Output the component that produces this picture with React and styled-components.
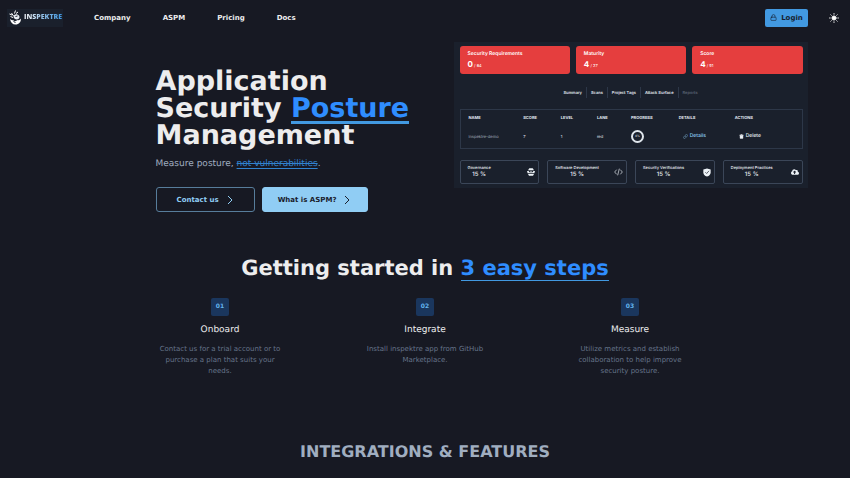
import React from "react";
import styled, { createGlobalStyle } from "styled-components";
import { Lock, Link, Trash } from "lucide-react";
import { FaCloudUploadAlt } from "react-icons/fa";

const GlobalStyle = createGlobalStyle`
  * { box-sizing: border-box; }
  body {
    margin: 0;
    background: #171923;
    color: #ededee;
    font-family: "DejaVu Sans", sans-serif;
    font-size: 7px;
    text-rendering: geometricPrecision;
    overflow-x: hidden;
  }
  h1, h2, h3, p { margin: 0; }
  a { color: inherit; text-decoration: none; }
  button { font-family: inherit; text-rendering: inherit; cursor: pointer; }
`;

const Header = styled.header`
  display: flex;
  align-items: center;
  height: 35px;
  padding: 0 11px 0 7px;
`;

const Brand = styled.a`
  display: flex;
  align-items: center;
  gap: 3px;
  height: 18px;
  padding: 0 1px 0 2px;
  background: #1a202c;
`;

const BrandName = styled.span`
  font: 800 7px "Open Sans", sans-serif;
  background: linear-gradient(90deg, #e8eef5 10%, #90bfe8 50%, #3f97e0 100%);
  background-clip: text;
  color: transparent;
`;

const Nav = styled.nav`
  display: flex;
  flex: 1;
  gap: 32px;
  margin-left: 31px;
  font-weight: 700;
`;

const LoginButton = styled.button`
  display: flex;
  align-items: center;
  justify-content: center;
  gap: 4px;
  width: 43px;
  height: 18px;
  margin-right: 21px;
  padding: 0;
  border: 0;
  border-radius: 2px;
  background: #4299e1;
  color: #171f30;
  font-size: 7px;
  font-weight: 700;
`;

const ThemeButton = styled.button`
  display: flex;
  padding: 0;
  border: 0;
  background: none;
  color: #ffffff;
`;

const Hero = styled.section`
  display: grid;
  grid-template-columns: 298fr 354fr;
  padding: 7px 5% 0 18.3%;
`;

const HeroCopy = styled.div`
  padding-top: 26px;
`;

const Title = styled.h1`
  font-size: 27px;
  line-height: 27px;
  white-space: nowrap;
`;

const Accent = styled.span`
  color: #2f8dff;
  border-bottom: ${(p) => p.$line}px solid #4299e1;
`;

const HeroTitleAccent = styled(Accent)`
  display: inline-block;
  height: 29px;
  margin-bottom: -2px;
`;

const Lead = styled.p`
  margin-top: 9px;
  color: #a0aec0;
  font-size: 9px;
  line-height: 13px;
`;

const Struck = styled.span`
  color: #3182ce;
  text-decoration: line-through underline #3182ce;
  text-underline-offset: 2px;
`;

const Actions = styled.div`
  display: flex;
  gap: 7px;
  margin-top: 16px;
`;

const ActionButton = styled.button`
  display: flex;
  align-items: center;
  justify-content: center;
  gap: 8px;
  width: ${(p) => (p.$solid ? 106 : 99)}px;
  height: 25px;
  padding: 0;
  border: 1px solid ${(p) => (p.$solid ? "#90cdf4" : "#577d9b")};
  border-radius: 3px;
  background: ${(p) => (p.$solid ? "#90cdf4" : "transparent")};
  color: ${(p) => (p.$solid ? "#1a202c" : "#90cdf4")};
  font-size: 7px;
  font-weight: 700;
`;

const Preview = styled.div`
  padding: 4px 5px 4px 6px;
  height: 146px;
  background: #1a202c;
  font-family: Inter, sans-serif;
  font-size: 4px;
  line-height: 5px;
`;

const ScoreCards = styled.div`
  display: grid;
  grid-template-columns: repeat(3, 1fr);
  gap: 6px;
`;

const ScoreCard = styled.div`
  height: 28px;
  padding: 5px 8px;
  border-radius: 3px;
  background: #e53e3e;
  color: #ffffff;
`;

const ScoreLabel = styled.div`
  font-size: 5px;
  font-weight: 600;
  line-height: 7px;
`;

const ScoreValue = styled.div`
  font-size: 4px;
  line-height: 12px;
  strong { font-size: 8px; }
`;

const Tabs = styled.div`
  display: flex;
  width: max-content;
  height: 11px;
  margin: 13px auto 0;
`;

const Tab = styled.button`
  padding: 0 4px;
  border: 0;
  border-right: 1px solid ${(p) => (p.disabled ? "transparent" : "#2d3748")};
  background: none;
  color: ${(p) => (p.disabled ? "#596272" : "#e2e8f0")};
  font-size: 4px;
  font-weight: 600;
`;

const TableFrame = styled.div`
  height: 40px;
  margin-top: 11px;
  border: 1px solid #2d3748;
`;

const ProjectTable = styled.table`
  width: 100%;
  border-collapse: collapse;
  table-layout: fixed;
  color: #e2e8f0;
  th, td { padding: 0; text-align: left; }
  th:first-child, td:first-child { padding-left: 8px; }
  th { height: 14px; font-size: 4px; font-weight: 700; }
  td { height: 24px; }
`;

const NameCell = styled.td`
  color: #a8b1bf;
`;

const Ring = styled.div`
  display: flex;
  align-items: center;
  justify-content: center;
  width: 13px;
  height: 13px;
  border: 2px solid #dfe5ec;
  border-radius: 50%;
  font-size: 3px;
`;

const RowButton = styled.button`
  display: flex;
  align-items: center;
  gap: 2px;
  padding: 0 4px;
  border: 0;
  background: none;
  color: ${(p) => (p.$link ? "#90cdf4" : "#edf2f7")};
  font-size: 5px;
  line-height: 7px;
  font-weight: 500;
`;

const Practices = styled.div`
  display: grid;
  grid-template-columns: repeat(4, 1fr);
  gap: 8px;
  margin-top: 11px;
`;

const PracticeCard = styled.div`
  display: flex;
  align-items: center;
  justify-content: space-between;
  height: 24px;
  padding: 0 3px 0 7px;
  border: 1px solid #3b4658;
  border-radius: 2px;
  color: #edf2f7;
  svg { flex: none; }
`;

const PracticeText = styled.div`
  font-size: 4px;
  font-weight: 500;
  white-space: nowrap;
`;

const Percent = styled.div`
  font-size: 6px;
  line-height: 9px;
  text-align: center;
`;

const Started = styled.section`
  margin-top: 44px;
  text-align: center;
`;

const StartedTitle = styled.h2`
  font-size: 21px;
  line-height: 25px;
`;

const Steps = styled.div`
  display: grid;
  grid-template-columns: repeat(3, 1fr);
  gap: 77px;
  max-width: 538px;
  margin: 17px auto 0;
`;

const StepBadge = styled.div`
  width: 18px;
  margin: 0 auto;
  border-radius: 2px;
  background: #1a365d;
  color: #63b3ed;
  font-size: 6px;
  font-weight: 700;
  line-height: 18px;
`;

const StepTitle = styled.h3`
  margin-top: 8px;
  font-size: 9px;
  font-weight: 400;
  line-height: 13px;
`;

const StepText = styled.p`
  margin-top: 7px;
  color: #66748a;
  font-size: 7px;
  line-height: 11px;
`;

const FeaturesTitle = styled.h2`
  margin: 65px 0 16px;
  color: #a0aec0;
  font-size: 16px;
  line-height: 20px;
  text-align: center;
`;

const Logo = () => (
  <svg width="12" height="15" viewBox="0 0 24 30" fill="none" aria-hidden="true">
    <path d="M2 18c1 7 5 11 11 11 7 0 11-5 11-12-2 3-5 4-7 3-3 3-7 3-9 0-2 1-4 0-6-2Z" fill="#fff" />
    <path d="M9 14c0-4 4-7 8-5 4 1 5 5 3 8-3 3-8 3-11-3Z" fill="#e8edf3" />
    <path d="M3 13l5 2M5 6l4 6M13 1l-2 6M1 8l5 2M18 4l-4 3" stroke="#fff" strokeWidth="2" />
    <path d="M13 13l4-1M9 23l4 2" stroke="#1a202c" strokeWidth="2" />
  </svg>
);

const Sun = () => (
  <svg width="10" height="10" viewBox="0 0 24 24" stroke="currentColor" strokeWidth="2" strokeLinecap="round" aria-hidden="true">
    <circle cx="12" cy="12" r="5" fill="currentColor" />
    <path d="M12 1v2M12 21v2M4.2 4.2l1.4 1.4M18.4 18.4l1.4 1.4M1 12h2M21 12h2M4.2 19.8l1.4-1.4M18.4 5.6l1.4-1.4" />
  </svg>
);

const Arrow = () => (
  <svg width="7" height="10" viewBox="0 0 7 10" fill="none" stroke="currentColor" aria-hidden="true">
    <path d="M1 1l4 4-4 4" />
  </svg>
);

const Council = () => (
  <svg width="8" height="8" viewBox="0 0 24 24" fill="currentColor" aria-hidden="true">
    <path d="M7 1h10l4 6H3z" />
    <path d="M0 9h5l2 4h10l2-4h5l-2 7H2zM3 18h18l-3 5H6z" />
    <circle cx="12" cy="10" r="2" />
  </svg>
);

const CodeTags = () => (
  <svg width="9" height="8" viewBox="0 0 27 24" fill="none" stroke="currentColor" strokeWidth="2" aria-hidden="true">
    <path d="M8 5l-6 7 6 7M19 5l6 7-6 7M16 2l-5 20" />
  </svg>
);

const ShieldCheck = () => (
  <svg width="8" height="9" viewBox="0 0 24 26" aria-hidden="true">
    <path d="M12 1l11 3v8c0 6-4 11-11 13C5 23 1 18 1 12V4z" fill="currentColor" />
    <path d="M7 12l4 4 7-8" fill="none" stroke="#1a202c" strokeWidth="2" />
  </svg>
);

const scores = [
  ["Security Requirements", 0, 64],
  ["Maturity", 4, 27],
  ["Score", 4, 91],
];

const practices = [
  ["Governance", <Council />],
  ["Software Development", <CodeTags />],
  ["Security Verifications", <ShieldCheck />],
  ["Deployment Practices", <FaCloudUploadAlt size={8} />],
];

const steps = [
  ["01", "Onboard", "Contact us for a trial account or to purchase a plan that suits your needs."],
  ["02", "Integrate", "Install inspektre app from GitHub Marketplace."],
  ["03", "Measure", "Utilize metrics and establish collaboration to help improve security posture."],
];

function Dashboard() {
  return (
    <Preview>
      <ScoreCards>
        {scores.map(([label, value, total]) => (
          <ScoreCard key={label}>
            <ScoreLabel>{label}</ScoreLabel>
            <ScoreValue><strong>{value}</strong> / {total}</ScoreValue>
          </ScoreCard>
        ))}
      </ScoreCards>
      <Tabs>
        <Tab>Summary</Tab>
        <Tab>Scans</Tab>
        <Tab>Project Tags</Tab>
        <Tab>Attack Surface</Tab>
        <Tab disabled>Reports</Tab>
      </Tabs>
      <TableFrame>
        <ProjectTable>
          <colgroup>
            <col width="18.4%" />
            <col width="11%" />
            <col width="10.6%" />
            <col width="10%" />
            <col width="14%" />
            <col width="16.4%" />
            <col />
          </colgroup>
          <thead>
            <tr>
              <th>NAME</th>
              <th>SCORE</th>
              <th>LEVEL</th>
              <th>LANE</th>
              <th>PROGRESS</th>
              <th>DETAILS</th>
              <th>ACTIONS</th>
            </tr>
          </thead>
          <tbody>
            <tr>
              <NameCell>inspektre-demo</NameCell>
              <td>7</td>
              <td>1</td>
              <td>red</td>
              <td><Ring>4%</Ring></td>
              <td><RowButton $link><Link size={5} />Details</RowButton></td>
              <td><RowButton><Trash size={5} fill="currentColor" />Delete</RowButton></td>
            </tr>
          </tbody>
        </ProjectTable>
      </TableFrame>
      <Practices>
        {practices.map(([name, icon]) => (
          <PracticeCard key={name}>
            <PracticeText>
              {name}
              <Percent>15 %</Percent>
            </PracticeText>
            {icon}
          </PracticeCard>
        ))}
      </Practices>
    </Preview>
  );
}

export default function App() {
  return (
    <>
      <GlobalStyle />
      <Header>
        <Brand href="#"><Logo /><BrandName>INSPEKTRE</BrandName></Brand>
        <Nav>
          <a href="#company">Company</a>
          <a href="#aspm">ASPM</a>
          <a href="#pricing">Pricing</a>
          <a href="#docs">Docs</a>
        </Nav>
        <LoginButton><Lock size={7} />Login</LoginButton>
        <ThemeButton aria-label="Switch theme"><Sun /></ThemeButton>
      </Header>
      <main>
        <Hero>
          <HeroCopy>
            <Title>
              Application<br />
              Security <HeroTitleAccent $line={3}>Posture</HeroTitleAccent><br />
              Management
            </Title>
            <Lead>Measure posture, <Struck>not vulnerabilities</Struck>.</Lead>
            <Actions>
              <ActionButton>Contact us <Arrow /></ActionButton>
              <ActionButton $solid>What is ASPM? <Arrow /></ActionButton>
            </Actions>
          </HeroCopy>
          <Dashboard />
        </Hero>
        <Started>
          <StartedTitle>Getting started in <Accent $line={1}>3 easy steps</Accent></StartedTitle>
          <Steps>
            {steps.map(([number, title, text]) => (
              <div key={number}>
                <StepBadge>{number}</StepBadge>
                <StepTitle>{title}</StepTitle>
                <StepText>{text}</StepText>
              </div>
            ))}
          </Steps>
        </Started>
        <FeaturesTitle>INTEGRATIONS &amp; FEATURES</FeaturesTitle>
      </main>
    </>
  );
}
